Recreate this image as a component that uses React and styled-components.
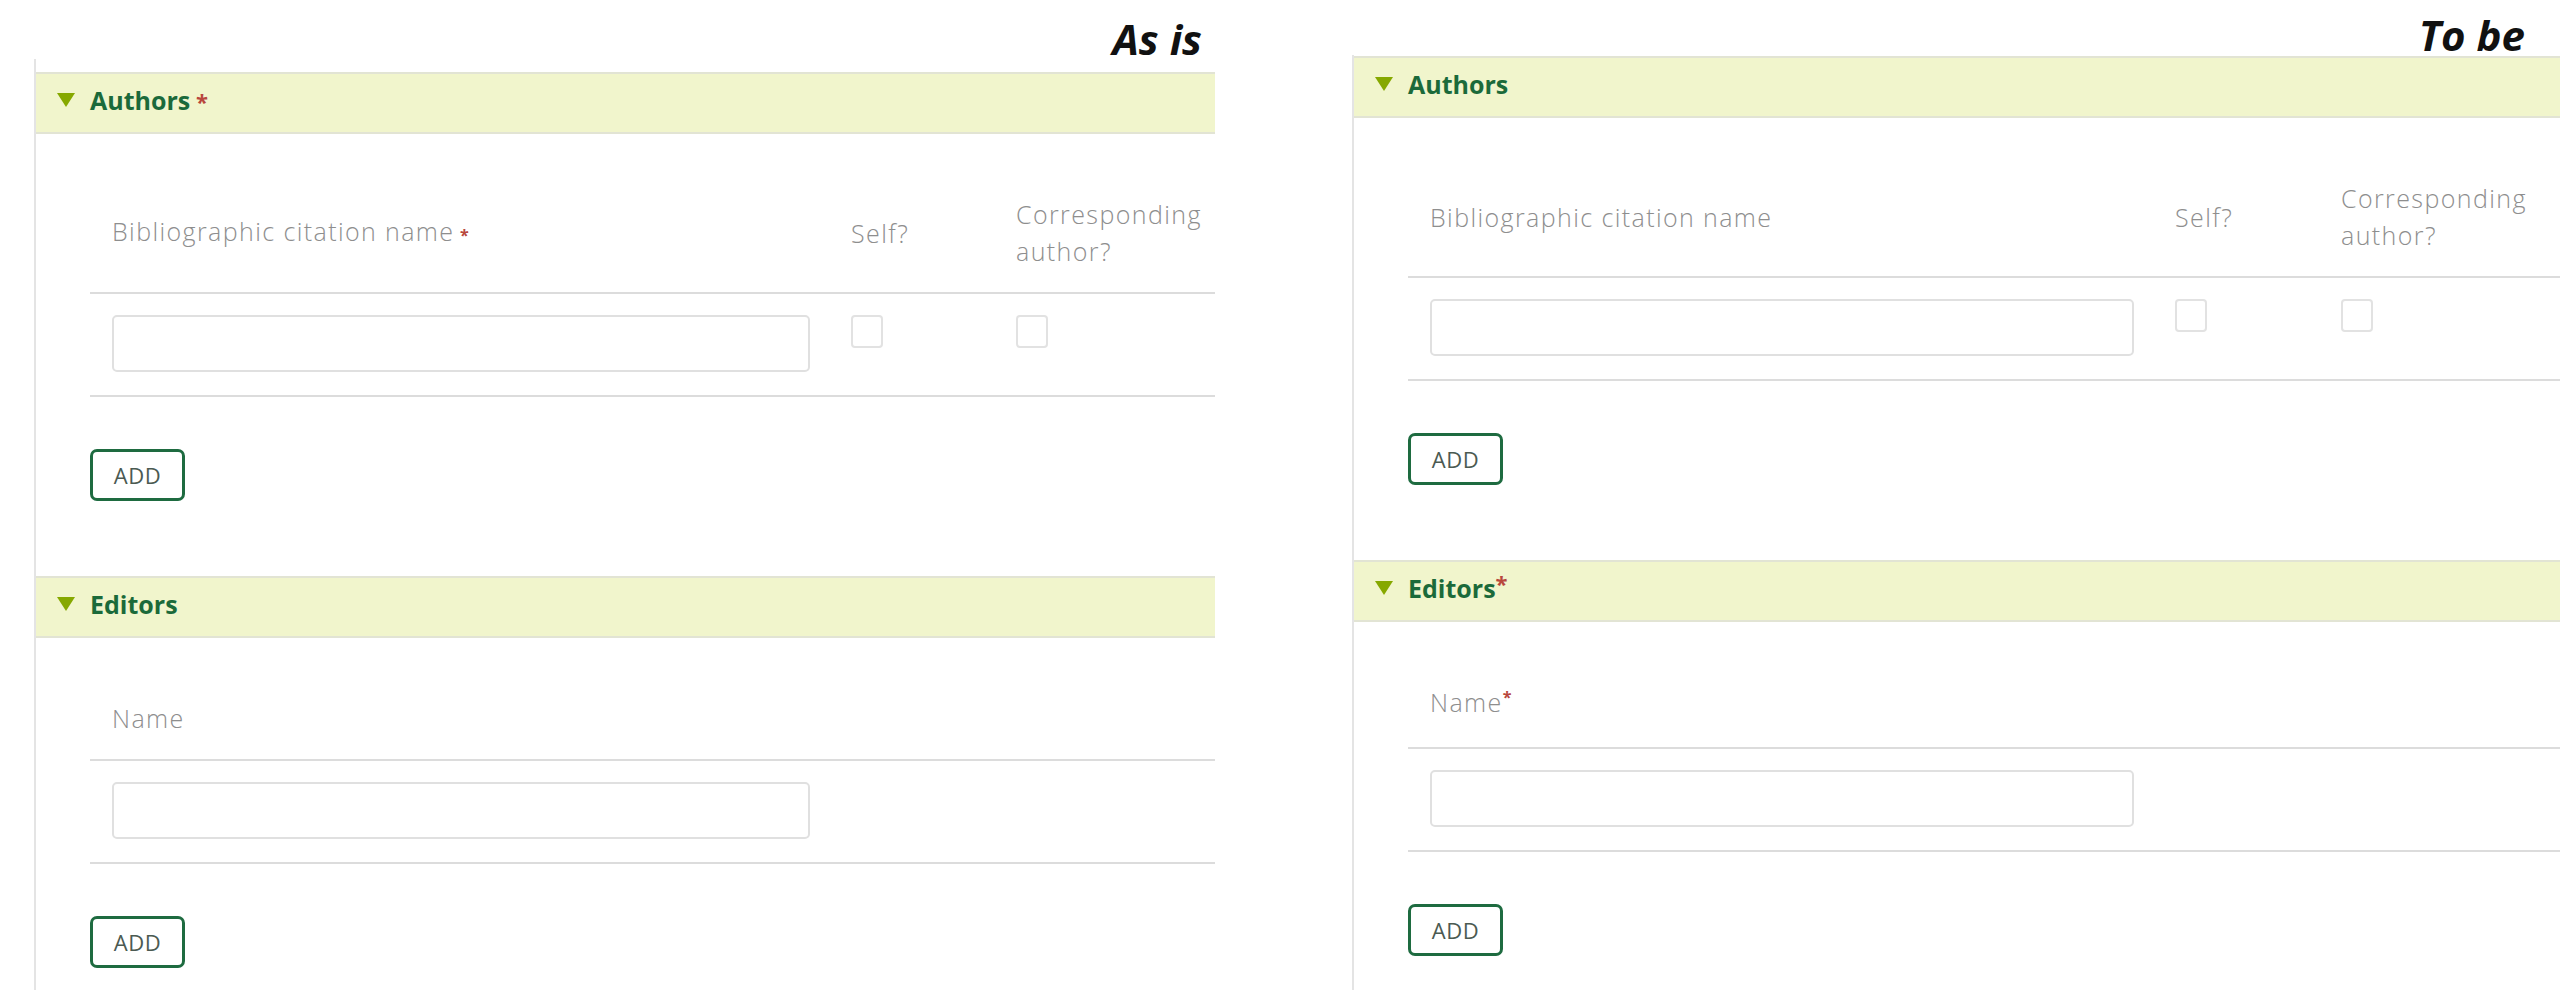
import React from 'react';
import styled, { createGlobalStyle } from 'styled-components';

const GlobalStyle = createGlobalStyle`
  html, body {
    margin: 0;
    padding: 0;
    background: #fff;
    overflow: hidden;
  }
  body {
    font-family: "Open Sans", "Liberation Sans", sans-serif;
  }
`;

// two screenshots side by side: current form and the requested one
const views = [
  {
    key: 'asis',
    title: 'As is',
    left: 34,
    width: 1181,
    titleTop: 19,
    titleRight: 13,
    panelTop: 13,
    cols: '739px 165px 220px',
    sections: [
      {
        name: 'Authors',
        req: 'inline',
        columns: [
          { label: 'Bibliographic citation name', req: 'inline' },
          { label: 'Self?' },
          { label: 'Corresponding author?' },
        ],
        checks: 2,
      },
      {
        name: 'Editors',
        columns: [{ label: 'Name' }],
        checks: 0,
      },
    ],
  },
  {
    key: 'tobe',
    title: 'To be',
    left: 137,
    width: 1208,
    titleTop: 15,
    titleRight: 35,
    panelTop: 1,
    cols: '745px 166px 1fr',
    sections: [
      {
        name: 'Authors',
        columns: [
          { label: 'Bibliographic citation name' },
          { label: 'Self?' },
          { label: 'Corresponding author?' },
        ],
        checks: 2,
      },
      {
        name: 'Editors',
        req: 'sup',
        columns: [{ label: 'Name', req: 'sup' }],
        checks: 0,
      },
    ],
  },
];

const Page = styled.div`
  display: flex;
  align-items: flex-start;
  width: 2560px;
  height: 990px;
  overflow: hidden;
`;

const Column = styled.div`
  display: flex;
  flex-direction: column;
  flex: 0 0 auto;
  width: ${(p) => p.$width}px;
  margin-left: ${(p) => p.$left}px;
  height: 990px;
`;

const Title = styled.div`
  height: 62px;
  box-sizing: border-box;
  padding-top: ${(p) => p.$top}px;
  padding-right: ${(p) => p.$right}px;
  text-align: right;
  font-family: "Open Sans", "Liberation Sans", sans-serif;
  font-style: italic;
  font-weight: 700;
  font-size: 42px;
  line-height: 40px;
  color: #111;
`;

const Panel = styled.div`
  flex: 1;
  border-left: 2px solid #e4e4e4;
  padding-top: ${(p) => p.$top}px;
`;

const Section = styled.section`
  margin-bottom: 75px;
`;

const SectionHeader = styled.div`
  display: flex;
  align-items: center;
  height: 62px;
  box-sizing: border-box;
  padding: 0 0 7px 21px;
  background: #f1f5cc;
  border-top: 2px solid #e2e4d4;
  border-bottom: 2px solid #e2e4d4;
`;

const Caret = styled.span`
  width: 0;
  height: 0;
  border-left: 9px solid transparent;
  border-right: 9px solid transparent;
  border-top: 14px solid #86a800;
  margin-right: 15px;
`;

const HeaderText = styled.span`
  font-weight: 700;
  font-size: 25px;
  color: #1b6a3a;
`;

const Req = styled.span`
  color: #b8473c;
  font-weight: 700;
  font-size: ${(p) => p.$size}px;
  position: relative;
  top: ${(p) => p.$lift}px;
`;

const SectionBody = styled.div`
  padding: 40px 0 0 54px;
`;

const Row = styled.div`
  display: grid;
  grid-template-columns: ${(p) => p.$cols};
  border-bottom: 2px solid #dcdcdc;
`;

const HeadCell = styled.div`
  display: flex;
  align-items: center;
  padding: 22px 0 22px 22px;
  font-size: 25px;
  line-height: 37px;
  font-weight: 300;
  letter-spacing: 1.4px;
  color: #8e8e8e;
`;

const BodyCell = styled.div`
  display: flex;
  align-items: flex-start;
  padding: 21px 19px 23px 22px;
`;

const TextInput = styled.input`
  width: 100%;
  height: 57px;
  box-sizing: border-box;
  border: 2px solid #e0e0e0;
  border-radius: 5px;
  background: #fff;
  outline: none;
`;

const Check = styled.span`
  display: block;
  width: 32px;
  height: 33px;
  box-sizing: border-box;
  border: 2px solid #e2e2e2;
  border-radius: 4px;
  background: #fff;
`;

const AddButton = styled.button`
  display: block;
  margin-top: 52px;
  width: 95px;
  height: 52px;
  padding: 0;
  border: 3px solid #1e6b40;
  border-radius: 7px;
  background: #fff;
  font-family: "Open Sans", "Liberation Sans", sans-serif;
  font-size: 22px;
  letter-spacing: 0.5px;
  color: #4b5a52;
`;

const Marker = ({ kind, size, lift }) => {
  if (!kind) return null;
  if (kind === 'sup') return <Req $size={size} $lift={lift}>*</Req>;
  return <Req $size={size} $lift={0}>{'\u00a0*'}</Req>;
};

const FormSection = ({ section, cols }) => (
  <Section>
    <SectionHeader>
      <Caret />
      <HeaderText>
        {section.name}
        <Marker kind={section.req} size={22} lift={-6} />
      </HeaderText>
    </SectionHeader>
    <SectionBody>
      <Row $cols={cols}>
        {section.columns.map((c) => (
          <HeadCell key={c.label}>
            <span>
              {c.label}
              <Marker kind={c.req} size={16} lift={-9} />
            </span>
          </HeadCell>
        ))}
      </Row>
      <Row $cols={cols}>
        <BodyCell>
          <TextInput type="text" />
        </BodyCell>
        {Array.from({ length: section.checks }).map((_, i) => (
          <BodyCell key={i}>
            <Check />
          </BodyCell>
        ))}
      </Row>
      <AddButton type="button">ADD</AddButton>
    </SectionBody>
  </Section>
);

export default function App() {
  return (
    <>
      <GlobalStyle />
      <Page>
        {views.map((v) => (
          <Column key={v.key} $left={v.left} $width={v.width}>
            <Title $top={v.titleTop} $right={v.titleRight}>{v.title}</Title>
            <Panel $top={v.panelTop}>
              {v.sections.map((s) => (
                <FormSection key={s.name} section={s} cols={v.cols} />
              ))}
            </Panel>
          </Column>
        ))}
      </Page>
    </>
  );
}
